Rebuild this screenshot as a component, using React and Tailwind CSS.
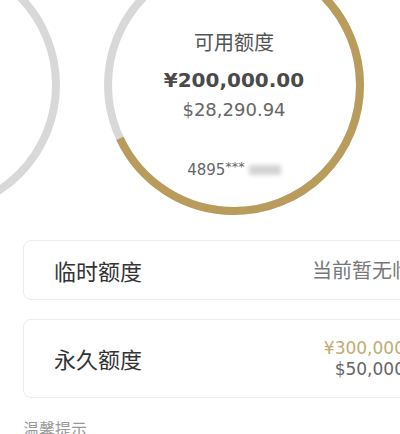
import React from "react";

const R = 126;
const C = 2 * Math.PI * R;

// progress ring drawn behind the slide's text
const Ring = ({ ratio }) => (
  <svg className="absolute inset-0" width="260" height="260" viewBox="0 0 260 260">
    <circle cx="130" cy="130" r={R} fill="none" stroke="#d8d8d8" strokeWidth="8" />
    {ratio > 0 && (
      <circle
        cx="130"
        cy="130"
        r={R}
        fill="none"
        stroke="#b99c5b"
        strokeWidth="8"
        strokeDasharray={`${C * ratio} ${C}`}
        transform="rotate(-90 130 130)"
      />
    )}
  </svg>
);

const cn = "font-['Noto_Sans_CJK_SC',sans-serif]";
const num = "font-['DejaVu_Sans','Noto_Sans_CJK_SC',sans-serif]";

export default function App() {
  return (
    <div className="w-[400px] h-[434px] overflow-hidden bg-white">
      {/* card carousel */}
      <div className="h-[222px] overflow-hidden">
        <div className="flex gap-[44px] ml-[-200px] mt-[-45px]">
          <div className="relative w-[260px] h-[260px] shrink-0">
            <Ring ratio={0} />
          </div>
          <div className="relative w-[260px] h-[260px] shrink-0 flex flex-col items-center">
            <Ring ratio={0.68} />
            <div className={`relative pt-[73px] text-[20px] leading-[28px] text-[#555] ${cn}`}>可用额度</div>
            <div className={`relative mt-[10px] text-[20px] leading-[28px] font-bold text-[#4a4a4a] ${num}`}>¥200,000.00</div>
            <div className={`relative mt-[4px] text-[18px] leading-[24px] text-[#666] ${num}`}>$28,290.94</div>
            <div className={`relative mt-[37px] flex items-center text-[15px] leading-[22px] text-[#666] ${num}`}>
              4895<span className="text-[13px] self-start leading-[16px]">***</span>
              <span className="ml-[4px] inline-block w-[32px] h-[10px] bg-[#d4d4d4] blur-[2px]" />
            </div>
          </div>
        </div>
      </div>

      <div className="pl-[23px] pt-[18px] flex flex-col gap-[19px]">
        <div className="w-[440px] h-[60px] shrink-0 flex items-center pl-[30px] pr-[26px] rounded-[8px] border border-[#ececec] bg-white">
          <span className={`w-[258px] shrink-0 text-[22px] text-[#333] ${cn}`}>临时额度</span>
          <span className={`whitespace-nowrap text-[20px] text-[#777] ${cn}`}>当前暂无临时额度</span>
        </div>
        <div className="w-[440px] h-[79px] shrink-0 flex items-center pl-[30px] pr-[30px] rounded-[8px] border border-[#ececec] bg-white">
          <span className={`w-[258px] shrink-0 text-[22px] text-[#333] ${cn}`}>永久额度</span>
          <div className={`flex-1 flex flex-col items-end text-[17px] leading-[21px] ${num}`}>
            <span className="text-[#c3aa72]">¥300,000.00</span>
            <span className="text-[#666]">$50,000.00</span>
          </div>
        </div>
        <div className={`text-[16px] leading-[22px] text-[#999] ${cn}`}>温馨提示</div>
      </div>
    </div>
  );
}
